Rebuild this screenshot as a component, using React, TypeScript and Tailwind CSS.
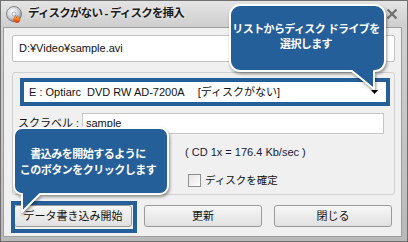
import React from "react";

const BLUE = "#255f99";

const DiscIcon = () => (
  <svg width="17" height="17" viewBox="0 0 17 17">
    <defs>
      <radialGradient id="disc" cx="40%" cy="35%" r="70%">
        <stop offset="0%" stopColor="#ffffff" />
        <stop offset="60%" stopColor="#c9ccd2" />
        <stop offset="100%" stopColor="#7d828b" />
      </radialGradient>
      <linearGradient id="flame" x1="0" y1="0" x2="0" y2="1">
        <stop offset="0%" stopColor="#ffd23a" />
        <stop offset="55%" stopColor="#ff7a12" />
        <stop offset="100%" stopColor="#d6220c" />
      </linearGradient>
    </defs>
    <circle cx="8" cy="8" r="7.5" fill="url(#disc)" stroke="#6d7179" strokeWidth="0.8" />
    <circle cx="8" cy="8" r="2" fill="#eef0f3" stroke="#8a8e95" strokeWidth="0.6" />
    <path
      d="M11.2 16.6c-2.6 0-3.9-1.8-3.4-3.9.3-1.3 1.3-2 1.6-3.3.9 1 1 2 .8 2.7.7-.5 1.1-1.6 1-2.6 1.7 1.2 3 3 2.7 4.7-.3 1.5-1.3 2.4-2.7 2.4z"
      fill="url(#flame)"
      stroke="#b3260c"
      strokeWidth="0.4"
    />
  </svg>
);

const Callout = ({
  className,
  d,
  width,
  height,
}: {
  className: string;
  d: string;
  width: number;
  height: number;
}) => (
  <svg
    className={`absolute ${className} drop-shadow-[1px_2px_1.5px_rgba(0,0,0,0.4)]`}
    width={width}
    height={height}
    viewBox={`0 0 ${width} ${height}`}
  >
    <path d={d} fill={BLUE} stroke="#ffffff" strokeWidth="2" strokeLinejoin="round" />
  </svg>
);

export default function App() {
  const buttons = ["データ書き込み開始", "更新", "閉じる"];

  return (
    <div className="relative w-[408px] h-[242px] overflow-hidden flex flex-col border border-[#6f6f6f] bg-gradient-to-b from-[#d4d4d4] to-[#b9b9b9] font-['Liberation_Sans','Noto_Sans_CJK_JP',sans-serif] text-[#111]">
      {/* title bar */}
      <div className="h-[26px] flex items-center pl-[5px] pr-[9px] bg-gradient-to-b from-[#e4e4e4] to-[#cecece]">
        <DiscIcon />
        <span className="ml-[5px] text-[11.5px] tracking-[-0.8px] font-bold text-[#1c1c1c] [text-shadow:0_0_3px_rgba(255,255,255,0.9)]">
          ディスクがない - ディスクを挿入
        </span>
        <svg className="ml-auto" width="12" height="12" viewBox="0 0 12 12">
          <path d="M1.5 1.5l9 9M10.5 1.5l-9 9" stroke="#6e6e6e" strokeWidth="2.2" />
        </svg>
      </div>

      {/* content */}
      <div className="flex-1 ml-[2px] mr-[5px] mb-[4px] border border-[#9e9e9e] bg-[#f0f0f0] flex flex-col pl-[8px] pr-[6px] pt-[7px]">
        <div className="h-[27px] border border-[#c3c3c3] rounded-[2px] bg-white flex items-center pl-[6px] text-[11px]">
          D:¥Video¥sample.avi
        </div>

        <div className="mt-[10px] h-[123px] border border-[#d0d0d0] rounded-[3px] flex flex-col">
          <div className="mt-[5px] ml-[7px] mr-[4px] h-[28px] border-[4px] border-[#255f99] bg-white flex items-center pl-[5px] pr-[8px] text-[11px]">
            <span className="whitespace-pre">E : Optiarc  DVD RW AD-7200A</span>
            <span className="ml-[13px]">[ディスクがない]</span>
            <svg className="ml-auto" width="7" height="4" viewBox="0 0 7 4">
              <polygon points="0,0 7,0 3.5,4" fill="#000" />
            </svg>
          </div>

          <div className="mt-[7px] h-[21px] flex items-center">
            <span className="ml-[5px] w-[64px] text-[11px]">スクラベル :</span>
            <div className="w-[302px] h-full border border-[#c5c5c5] bg-white flex items-center pl-[3px] text-[11px]">
              sample
            </div>
          </div>

          <div className="mt-[8px] h-[20px] flex items-center">
            <div className="ml-[69px] w-[85px] h-full border border-[#c5c5c5] rounded-[2px] bg-white" />
            <span className="ml-[18px] text-[11px] text-[#1a1a3a]">( CD 1x = 176.4 Kb/sec )</span>
          </div>

          <div className="mt-[11px] flex items-center">
            <div className="ml-[175px] w-[13px] h-[13px] border border-[#8f8f8f] bg-gradient-to-br from-[#e4e4e4] to-white" />
            <span className="ml-[4px] text-[10.5px]">ディスクを確定</span>
          </div>
        </div>

        <div className="mt-[10px] ml-[2px] flex gap-[12px]">
          {buttons.map((label) => (
            <button
              key={label}
              className="w-[118px] h-[22px] rounded-[3px] border border-[#9a9a9a] bg-gradient-to-b from-[#f7f7f7] to-[#e1e1e1] text-[11px] text-[#111] flex items-center justify-center"
            >
              {label}
            </button>
          ))}
        </div>
      </div>

      {/* highlight around the start button */}
      <div className="absolute left-[10px] top-[200px] w-[126px] h-[32px] border-[4px] border-[#255f99]" />

      {/* callout: drive list */}
      <Callout
        className="left-[227px] top-[2px]"
        width={160}
        height={90}
        d="M12 2H147A10 10 0 0 1 157 12V58A10 10 0 0 1 147 68H146L146 86L124 68H12A10 10 0 0 1 2 58V12A10 10 0 0 1 12 2Z"
      />
      <div className="absolute left-[229px] top-[21px] w-[152px] text-center whitespace-nowrap tracking-[-0.6px] text-white font-bold text-[11px] leading-[15px]">
        リストからディスク ドライブを
        <br />
        選択します
      </div>

      {/* callout: start button */}
      <Callout
        className="left-[11px] top-[125px]"
        width={160}
        height={90}
        d="M10 2H148A8 8 0 0 1 156 10V60A8 8 0 0 1 148 68H28L10 86V68A8 8 0 0 1 2 60V10A8 8 0 0 1 10 2Z"
      />
      <div className="absolute left-[13px] top-[145px] w-[148px] text-center whitespace-nowrap tracking-[-0.5px] text-white font-bold text-[11px] leading-[16px]">
        書込みを開始するように
        <br />
        このボタンをクリックします
      </div>
    </div>
  );
}
